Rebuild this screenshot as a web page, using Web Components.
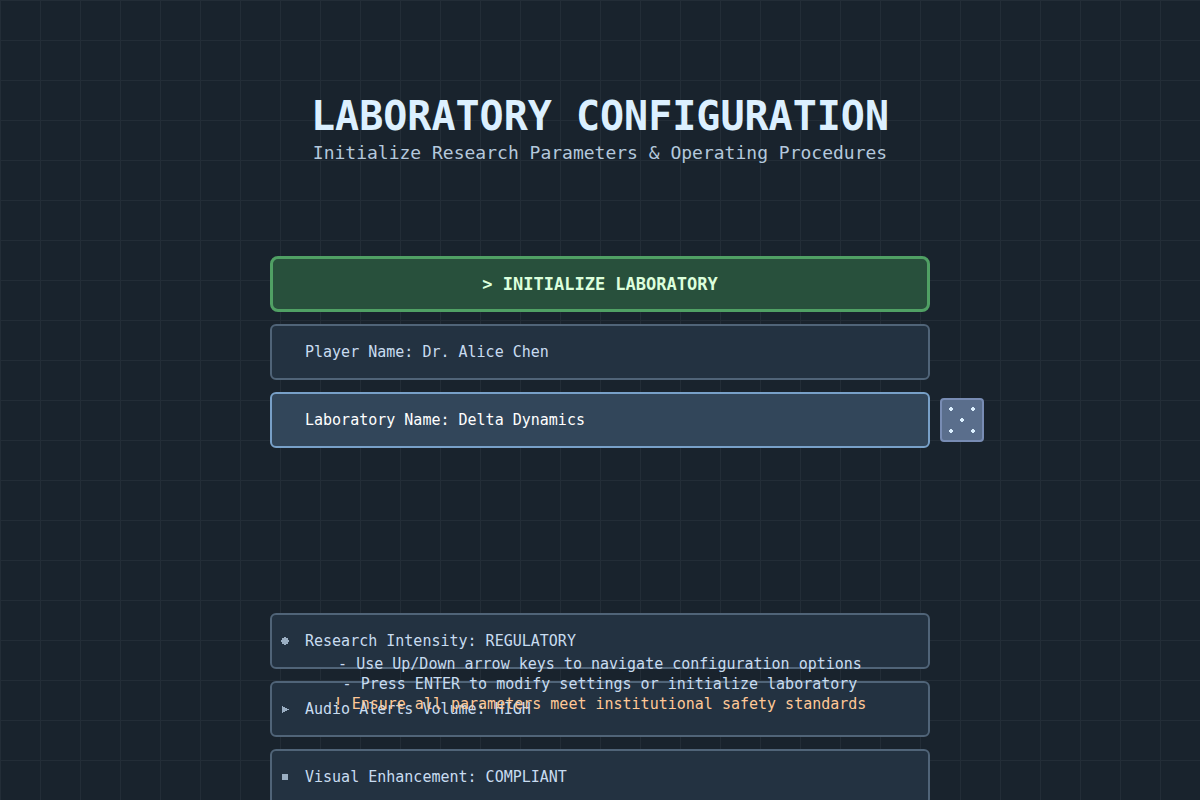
<!DOCTYPE html>
<html lang="en">
<head>
<meta charset="utf-8">
<title>Laboratory Configuration</title>
<style>
  html, body { margin: 0; background: #19232d; }
  body { font-family: "DejaVu Sans Mono", "Liberation Mono", monospace; color: #c8dcf0; }
</style>
</head>
<body>
<lab-screen>
  <lab-heading slot="heading">
    <span slot="title">LABORATORY CONFIGURATION</span>
    <span slot="subtitle">Initialize Research Parameters &amp; Operating Procedures</span>
  </lab-heading>
  <lab-option kind="primary">&gt; INITIALIZE LABORATORY</lab-option>
  <lab-option>Player Name: Dr. Alice Chen</lab-option>
  <lab-option kind="selected">Laboratory Name: Delta Dynamics<dice-button slot="action"></dice-button></lab-option>
  <lab-option slot="settings" icon="circle">Research Intensity: REGULATORY</lab-option>
  <lab-option slot="settings" icon="triangle">Audio Alerts Volume: HIGH</lab-option>
  <lab-option slot="settings" icon="square">Visual Enhancement: COMPLIANT</lab-option>
  <lab-hints slot="hints">
    <li>- Use Up/Down arrow keys to navigate configuration options</li>
    <li>- Press ENTER to modify settings or initialize laboratory</li>
    <li class="warning">! Ensure all parameters meet institutional safety standards</li>
  </lab-hints>
</lab-screen>
<script>
class LabElement extends HTMLElement {
  connectedCallback() {
    if (!this.shadowRoot) this.attachShadow({ mode: "open" }).innerHTML = this.render();
  }
}

customElements.define("lab-screen", class extends LabElement {
  render() {
    return `<style>
      :host {
        display: block; position: relative; height: 100vh; overflow: hidden;
        background-color: #19232d;
        background-image: linear-gradient(#232d37 1px, transparent 1px), linear-gradient(90deg, #232d37 1px, transparent 1px);
        background-size: 40px 40px;
      }
      main { display: flex; flex-direction: column; align-items: center; padding-top: 92px; }
      .group { display: flex; flex-direction: column; gap: 12px; width: 55%; min-width: 320px; }
      .top { margin-top: 88px; }
      .settings { margin-top: 165px; }
      .hints { position: absolute; left: 0; right: 0; bottom: 86px; pointer-events: none; }
    </style>
    <main>
      <slot name="heading"></slot>
      <div class="group top"><slot></slot></div>
      <div class="group settings"><slot name="settings"></slot></div>
    </main>
    <div class="hints"><slot name="hints"></slot></div>`;
  }
});

customElements.define("lab-heading", class extends LabElement {
  render() {
    return `<style>
      :host { display: block; text-align: center; }
      h1 { margin: 0; font-size: 40px; line-height: 48px; font-weight: 700; color: #dcf0ff; }
      p { margin: 0; padding-bottom: 2px; font-size: 18px; line-height: 26px; color: #b4c8dc; }
    </style>
    <h1><slot name="title"></slot></h1>
    <p><slot name="subtitle"></slot></p>`;
  }
});

const ICONS = {
  circle: '<path d="M3 0h2v1h2v2h1v2h-1v2h-2v1h-2v-1h-2v-2h-1v-2h1v-2h2z"/>',
  triangle: '<path d="M1 1h1v1h2v1h2v1h2v1h-2v1h-2v1h-2v1h-1z"/>',
  square: '<path d="M1 1h6v6h-6z"/>'
};

customElements.define("lab-option", class extends LabElement {
  render() {
    const icon = ICONS[this.getAttribute("icon")] || "";
    return `<style>
      :host { display: block; position: relative; }
      button {
        box-sizing: border-box; display: flex; align-items: center; gap: 16px;
        width: 100%; height: 56px; margin: 0; padding: 0 9px;
        font: inherit; font-size: 15px; line-height: 20px; text-align: left;
        color: #c8dcf0; background: #233241; border: 2px solid #506478; border-radius: 6px;
      }
      svg { flex: none; width: 8px; height: 8px; fill: #9aaec2; }
      :host([kind="selected"]) button { color: #fff; background: #32465a; border-color: #78a0c8; }
      :host([kind="primary"]) button {
        justify-content: center; font-size: 17px; font-weight: 700;
        color: #dcffdc; background: #28503c; border: 3px solid #50a064; border-radius: 8px;
      }
      :host([kind="primary"]) svg { display: none; }
      .action { position: absolute; left: 100%; top: 6px; padding-left: 10px; }
    </style>
    <button type="button"><svg viewBox="0 0 8 8" aria-hidden="true">${icon}</svg><span><slot></slot></span></button>
    <div class="action"><slot name="action"></slot></div>`;
  }
});

customElements.define("dice-button", class extends LabElement {
  render() {
    const pip = (x, y) => `<path d="M${x + 1} ${y}h2v1h1v2h-1v1h-2v-1h-1v-2h1z"/>`;
    return `<style>
      :host { display: block; }
      button {
        box-sizing: border-box; display: block; width: 44px; height: 44px; padding: 0;
        background: #5a6e8c; border: 2px solid #788cb4; border-radius: 4px;
      }
      svg { display: block; width: 40px; height: 40px; fill: #dcf0ff; }
    </style>
    <button type="button" aria-label="Randomize laboratory name">
      <svg viewBox="0 0 40 40" aria-hidden="true">${pip(7, 7)}${pip(29, 7)}${pip(18, 18)}${pip(7, 29)}${pip(29, 29)}</svg>
    </button>`;
  }
});

customElements.define("lab-hints", class extends LabElement {
  render() {
    return `<style>
      :host { display: block; }
      ul { margin: 0; padding: 0; list-style: none; font-size: 15px; line-height: 20px; text-align: center; color: #c8dcf0; }
      ::slotted(li) { display: block; }
      ::slotted(.warning) { color: #ffc896; }
    </style>
    <ul><slot></slot></ul>`;
  }
});
</script>
</body>
</html>
